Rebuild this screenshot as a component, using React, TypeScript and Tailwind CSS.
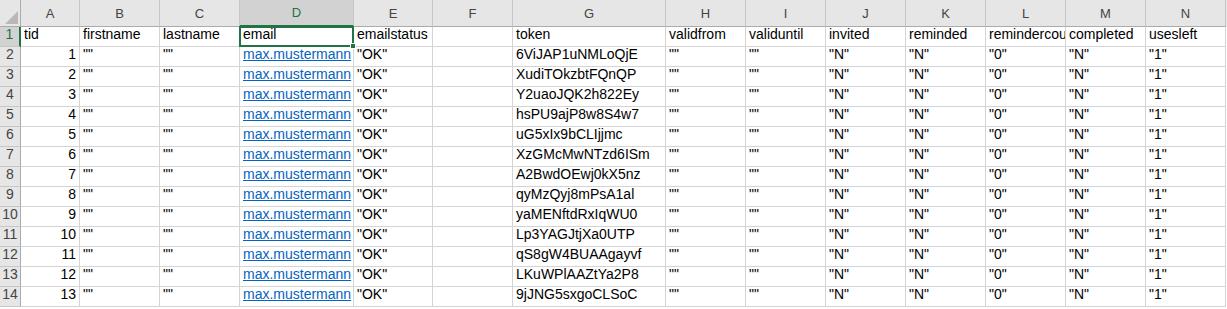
import React from "react";

const cols = [
  { key: "A", w: "w-[59px]" },
  { key: "B", w: "w-[80px]" },
  { key: "C", w: "w-[80px]" },
  { key: "D", w: "w-[114px]" },
  { key: "E", w: "w-[79px]" },
  { key: "F", w: "w-[80px]" },
  { key: "G", w: "w-[153px]" },
  { key: "H", w: "w-[80px]" },
  { key: "I", w: "w-[80px]" },
  { key: "J", w: "w-[80px]" },
  { key: "K", w: "w-[80px]" },
  { key: "L", w: "w-[80px]" },
  { key: "M", w: "w-[80px]" },
  { key: "N", w: "w-[80px]" },
];

const headers = [
  "tid",
  "firstname",
  "lastname",
  "email",
  "emailstatus",
  "",
  "token",
  "validfrom",
  "validuntil",
  "invited",
  "reminded",
  "remindercount",
  "completed",
  "usesleft",
];

const tokens = [
  "6ViJAP1uNMLoQjE",
  "XudiTOkzbtFQnQP",
  "Y2uaoJQK2h822Ey",
  "hsPU9ajP8w8S4w7",
  "uG5xIx9bCLIjjmc",
  "XzGMcMwNTzd6ISm",
  "A2BwdOEwj0kX5nz",
  "qyMzQyj8mPsA1al",
  "yaMENftdRxIqWU0",
  "Lp3YAGJtjXa0UTP",
  "qS8gW4BUAAgayvf",
  "LKuWPlAAZtYa2P8",
  "9jJNG5sxgoCLSoC",
];

const cell =
  "h-full shrink-0 border-r border-b border-[#d4d4d4] whitespace-nowrap flex items-end px-[3px] pb-[1px]";

const App = () => {
  const rows = tokens.map((t, i) => [
    String(i + 1),
    '""',
    '""',
    "max.mustermann",
    '"OK"',
    "",
    t,
    '""',
    '""',
    '"N"',
    '"N"',
    '"0"',
    '"N"',
    '"1"',
  ]);

  return (
    <main
      className="w-[1227px] h-[309px] overflow-hidden bg-white text-[14px] text-black"
      style={{ fontFamily: '"Liberation Sans", Arial, sans-serif' }}
    >
      {/* COLUMN HEADERS */}
      <div className="flex h-[27px] bg-[#e6e6e6]">
        <div className="w-[21px] h-full shrink-0 border-r border-b border-[#ababab] flex items-end justify-end p-[2px]">
          <svg width="13" height="13" viewBox="0 0 13 13">
            <polygon points="13,0 13,13 0,13" fill="#b8b8b8" />
          </svg>
        </div>
        {cols.map((c) => (
          <div
            key={c.key}
            className={`${c.w} h-full shrink-0 border-r border-[#c6c6c6] flex items-end justify-center pb-[3px] text-[13px] ${
              c.key === "D"
                ? "bg-[#d2d2d2] text-[#217346] border-b-2 border-b-[#217346]"
                : "text-[#444444] border-b border-b-[#ababab]"
            }`}
          >
            {c.key}
          </div>
        ))}
      </div>

      {/* ROW 1 */}
      <div className="flex h-[20px]">
        <div className="w-[21px] h-full shrink-0 bg-[#d2d2d2] border-r-2 border-r-[#217346] border-b border-b-[#c6c6c6] flex items-end justify-center pb-[1px] text-[#217346]">
          1
        </div>
        {headers.map((h, i) => (
          <div
            key={i}
            className={`${cols[i].w} ${cell} ${
              i === 3 ? "relative overflow-visible" : "overflow-hidden"
            }`}
          >
            {h}
            {i === 3 ? (
              <div className="absolute -left-[1px] -top-[1px] -right-[1px] -bottom-[1px] border-2 border-[#217346]">
                <div className="absolute -right-[4px] -bottom-[4px] w-[6px] h-[6px] bg-[#217346] border border-white" />
              </div>
            ) : null}
          </div>
        ))}
      </div>

      {/* DATA ROWS */}
      {rows.map((r, ri) => (
        <div key={ri} className="flex h-[20px]">
          <div className="w-[21px] h-full shrink-0 bg-[#e6e6e6] border-r border-r-[#ababab] border-b border-b-[#c6c6c6] flex items-end justify-center pb-[1px] text-[#444444]">
            {ri + 2}
          </div>
          {r.map((v, i) => (
            <div
              key={i}
              className={`${cols[i].w} ${cell} overflow-hidden ${
                i === 0 ? "justify-end" : ""
              }`}
            >
              {i === 3 ? (
                <span className="text-[#0563c1] underline">{v}</span>
              ) : (
                v
              )}
            </div>
          ))}
        </div>
      ))}
    </main>
  );
};

export default App;
